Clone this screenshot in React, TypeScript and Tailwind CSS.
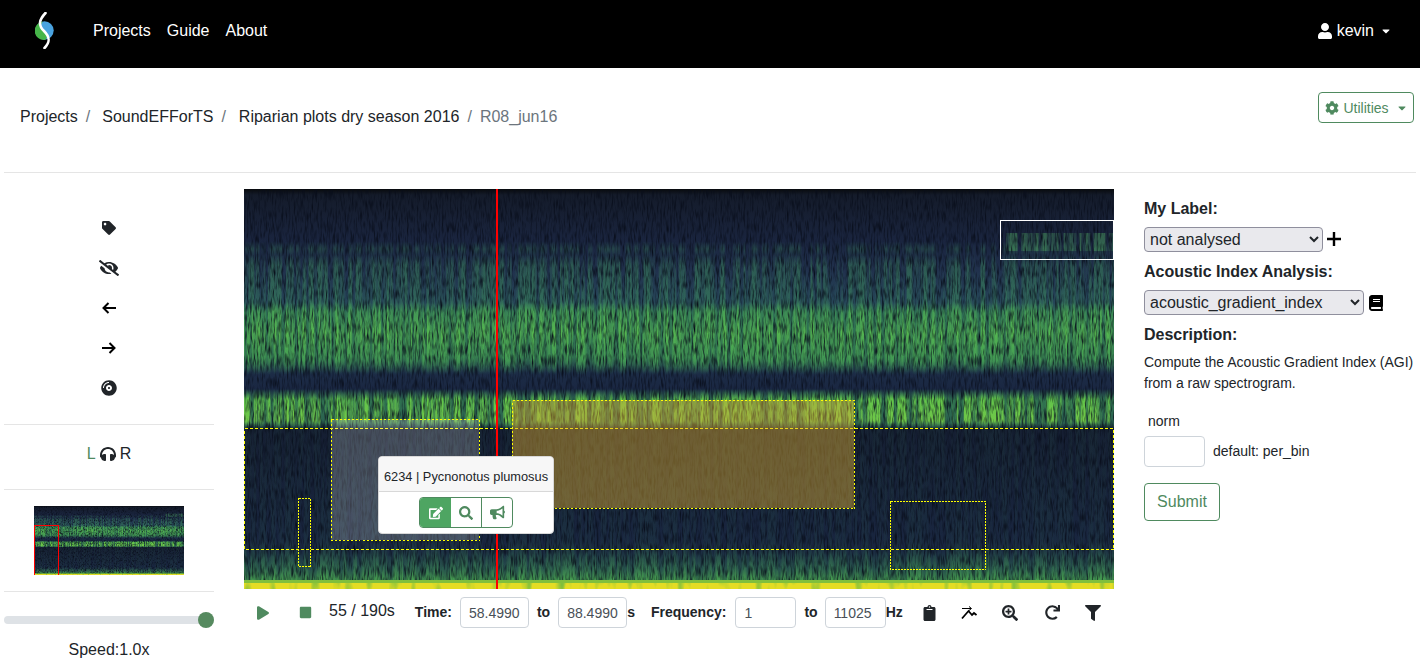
import {
  FaBook,
  FaBullhorn,
  FaCaretDown,
  FaClipboard,
  FaCog,
  FaCompactDisc,
  FaEdit,
  FaEyeSlash,
  FaFilter,
  FaHeadphones,
  FaPlay,
  FaRedo,
  FaSearch,
  FaSearchPlus,
  FaStop,
  FaTag,
  FaUser,
} from "react-icons/fa";

// annotation boxes on the spectrogram, in its own pixels
const boxes = [
  { x: 0, y: 239, w: 869, h: 121, dash: "3 2", fill: "none", opacity: 0 },
  { x: 87, y: 230, w: 148, h: 121, dash: "2 2", fill: "#ffffff", opacity: 0.2 },
  { x: 268, y: 211, w: 342, h: 108, dash: "2 2", fill: "#daa933", opacity: 0.45 },
  { x: 54, y: 309, w: 12, h: 68, dash: "2 1", fill: "none", opacity: 0 },
  { x: 646, y: 312, w: 95, h: 68, dash: "2 1", fill: "none", opacity: 0 },
];

function ArrowLeft() {
  return (
    <svg width="14" height="12" viewBox="0 0 14 12" fill="none" stroke="#000" strokeWidth="2">
      <path d="M6.5 1L1.5 6L6.5 11M1.5 6H14" />
    </svg>
  );
}

function ArrowRight() {
  return (
    <svg width="14" height="12" viewBox="0 0 14 12" fill="none" stroke="#000" strokeWidth="2">
      <path d="M7.5 1L12.5 6L7.5 11M12.5 6H0" />
    </svg>
  );
}

function PlusIcon() {
  return (
    <svg width="14" height="14" viewBox="0 0 14 14" stroke="#000" strokeWidth="2.4" className="-mt-[2px] ml-1">
      <path d="M7 0V14M0 7H14" />
    </svg>
  );
}

function Logo() {
  return (
    <svg width="19" height="37" viewBox="0 0 19 37">
      <circle cx="9.5" cy="18.5" r="9.2" fill="#4aa3e0" />
      <path d="M8 9.5 C5 13 5 16 9 19 C13 22 13 25 10 28 A9.2 9.2 0 0 1 8 9.5 Z" fill="#46b549" />
      <path d="M10.5 1 C4 8 3 13 9 19 C15 25 15.5 30 9.5 36" fill="none" stroke="#fff" strokeWidth="2.6" strokeLinecap="round" />
    </svg>
  );
}

function Spectrogram({ id, w, h }: { id: string; w: number; h: number }) {
  return (
    <svg width={w} height={h} viewBox="0 0 870 400" preserveAspectRatio="none" className="block">
      <defs>
        <linearGradient id={id + "base"} x1="0" y1="0" x2="0" y2="1">
          <stop offset="0" stopColor="#080a0c" />
          <stop offset="0.015" stopColor="#141b2a" />
          <stop offset="0.14" stopColor="#1a2540" />
          <stop offset="0.2" stopColor="#20304c" />
          <stop offset="0.285" stopColor="#264658" />
          <stop offset="0.31" stopColor="#2f7055" />
          <stop offset="0.42" stopColor="#30704f" />
          <stop offset="0.46" stopColor="#1c2c46" />
          <stop offset="0.5" stopColor="#1a2742" />
          <stop offset="0.53" stopColor="#2f7050" />
          <stop offset="0.585" stopColor="#2a6050" />
          <stop offset="0.6" stopColor="#151e32" />
          <stop offset="0.9" stopColor="#192640" />
          <stop offset="0.95" stopColor="#26504c" />
          <stop offset="1" stopColor="#3c8a45" />
        </linearGradient>
        <linearGradient id={id + "bands"} x1="0" y1="0" x2="0" y2="1">
          <stop offset="0.13" stopColor="#3d8f5c" stopOpacity="0" />
          <stop offset="0.15" stopColor="#3d8f5c" stopOpacity="0.3" />
          <stop offset="0.165" stopColor="#3d8f5c" stopOpacity="0.1" />
          <stop offset="0.19" stopColor="#3d8f5c" stopOpacity="0.45" />
          <stop offset="0.28" stopColor="#3d8f5c" stopOpacity="0.5" />
          <stop offset="0.305" stopColor="#4aa655" stopOpacity="0.9" />
          <stop offset="0.36" stopColor="#55b650" stopOpacity="1" />
          <stop offset="0.43" stopColor="#45a055" stopOpacity="0.85" />
          <stop offset="0.465" stopColor="#3d8f5c" stopOpacity="0" />
          <stop offset="0.5" stopColor="#3d8f5c" stopOpacity="0" />
          <stop offset="0.525" stopColor="#62c44a" stopOpacity="1" />
          <stop offset="0.58" stopColor="#70c848" stopOpacity="1" />
          <stop offset="0.6" stopColor="#3d8f5c" stopOpacity="0.08" />
          <stop offset="0.88" stopColor="#3d8f5c" stopOpacity="0.1" />
          <stop offset="0.95" stopColor="#4aa655" stopOpacity="0.4" />
          <stop offset="1" stopColor="#55bd50" stopOpacity="0.9" />
        </linearGradient>
        <filter id={id + "streak"} x="0" y="0" width="100%" height="100%" colorInterpolationFilters="sRGB">
          <feTurbulence type="fractalNoise" baseFrequency="0.24 0.007" numOctaves="2" seed="7" result="n" />
          <feColorMatrix in="n" type="matrix" values="0 0 0 0 0  0 0 0 0 0  0 0 0 0 0  3.2 0 0 0 -1.05" result="a" />
          <feComposite in="SourceGraphic" in2="a" operator="in" />
        </filter>
        <filter id={id + "speck"} x="0" y="0" width="100%" height="100%" colorInterpolationFilters="sRGB">
          <feTurbulence type="fractalNoise" baseFrequency="0.6 0.09" numOctaves="2" seed="3" result="n" />
          <feColorMatrix in="n" type="matrix" values="0 0 0 0 0.03  0 0 0 0 0.05  0 0 0 0 0.1  0 2 0 0 -0.85" />
        </filter>
        <filter id={id + "yellow"} x="0" y="0" width="100%" height="100%" colorInterpolationFilters="sRGB">
          <feTurbulence type="fractalNoise" baseFrequency="0.09 0.02" numOctaves="2" seed="11" result="n" />
          <feColorMatrix in="n" type="matrix" values="0 0 0 0 0  0 0 0 0 0  0 0 0 0 0  4 0 0 0 -0.9" result="a" />
          <feComposite in="SourceGraphic" in2="a" operator="in" />
        </filter>
      </defs>
      <rect width="870" height="400" fill={`url(#${id}base)`} />
      <rect width="870" height="400" fill={`url(#${id}bands)`} filter={`url(#${id}streak)`} />
      <rect x="762" y="44" width="108" height="18" fill="#4fa860" opacity="0.45" filter={`url(#${id}streak)`} />
      <rect width="870" height="400" fill="#000" filter={`url(#${id}speck)`} />
      <rect y="391" width="870" height="9" fill="#80bf3c" />
      <rect y="394" width="870" height="6" fill="#e4dc24" filter={`url(#${id}yellow)`} />
    </svg>
  );
}

function TrendIcon() {
  return (
    <svg width="16" height="14" viewBox="0 0 16 14" fill="none" stroke="#000">
      <path d="M1 2.5H10M8 .5L10.5 2.5L8 4.5" strokeWidth="1" />
      <path d="M1 12.5L7.5 5L11 9L13 7L15.5 9" strokeWidth="1.8" />
    </svg>
  );
}

function Field({ value, className }: { value: string; className: string }) {
  return (
    <input
      readOnly
      value={value}
      className={`h-[31px] rounded border border-[#ced4da] bg-white px-2 text-[14px] text-[#495057] outline-none ${className}`}
    />
  );
}

export default function App() {
  return (
    <div className="h-[668px] overflow-hidden bg-white font-['Liberation_Sans',sans-serif] text-[16px] text-[#212529]">
      {/* Navbar */}
      <nav className="flex h-[68px] items-center bg-black text-white">
        <div className="ml-[35px] -mt-[7px]">
          <Logo />
        </div>
        <div className="ml-[39px] flex gap-4 -mt-[6px]">
          <span>Projects</span>
          <span>Guide</span>
          <span>About</span>
        </div>
        <div className="ml-auto mr-[29px] flex items-center -mt-[6px]">
          <FaUser className="mr-1 h-4 w-4" />
          <span>kevin</span>
          <FaCaretDown className="ml-[7px] h-[12px] w-[10px]" />
        </div>
      </nav>

      {/* Breadcrumb */}
      <div className="mx-[4px] flex h-[105px] items-start justify-between border-b border-[#e5e5e5] px-[16px]">
        <div className="mt-[37px] flex">
          <span>Projects</span>
          <span className="ml-2 mr-3 text-[#6c757d]">/</span>
          <span>SoundEFForTS</span>
          <span className="ml-2 mr-[13px] text-[#6c757d]">/</span>
          <span>Riparian plots dry season 2016</span>
          <span className="mx-2 text-[#6c757d]">/</span>
          <span className="text-[#6c757d]">R08_jun16</span>
        </div>
        <button className="mr-[-14px] mt-[24px] flex h-[31px] w-[96px] items-center justify-center rounded border border-[#4f8a5f] pt-[1px] text-[14px] text-[#4f8a5f]">
          <FaCog className="mr-1 h-[14px] w-[14px]" />
          Utilities
          <FaCaretDown className="ml-2 h-[12px] w-[10px]" />
        </button>
      </div>

      <div className="flex">
        {/* Left tools */}
        <aside className="ml-[4px] w-[210px] shrink-0">
          <div className="flex flex-col items-center border-b border-[#e5e5e5] pt-[35px] pb-4">
            <div className="flex h-10 items-center justify-center">
              <FaTag className="h-[14px] w-[14px]" />
            </div>
            <div className="flex h-10 items-center justify-center">
              <FaEyeSlash className="h-4 w-5" />
            </div>
            <div className="flex h-10 items-center justify-center">
              <ArrowLeft />
            </div>
            <div className="flex h-10 items-center justify-center">
              <ArrowRight />
            </div>
            <div className="flex h-10 items-center justify-center">
              <FaCompactDisc className="h-4 w-4" />
            </div>
          </div>
          <div className="flex h-[65px] items-center justify-center gap-1 border-b border-[#e5e5e5] pb-[6px]">
            <span className="text-[#4f8a5f]">L</span>
            <FaHeadphones className="h-4 w-4" />
            <span>R</span>
          </div>
          <div className="flex justify-center border-b border-[#e5e5e5] py-4">
            <div className="relative">
              <Spectrogram id="mini" w={150} h={69} />
              <div className="absolute bottom-0 left-0 h-[50px] w-[25px] border-x border-t border-[#ff0000]" />
            </div>
          </div>
          <div className="mt-[24px] flex h-2 items-center justify-end rounded-full bg-[#dee2e6]">
            <div className="h-4 w-4 rounded-full bg-[#568a5f]" />
          </div>
          <div className="mt-[14px] text-center">Speed:1.0x</div>
        </aside>

        {/* Spectrogram and toolbar */}
        <main className="ml-[30px] mt-[16px] w-[870px] shrink-0">
          <div className="relative h-[400px] w-[870px]">
            <Spectrogram id="main" w={870} h={400} />
            <svg width="870" height="400" shapeRendering="crispEdges" className="absolute left-0 top-0">
              {boxes.map((b, i) => (
                <g key={i}>
                  <rect x={b.x} y={b.y} width={b.w} height={b.h} fill={b.fill} fillOpacity={b.opacity} />
                  <rect x={b.x + 0.5} y={b.y + 0.5} width={b.w} height={b.h} fill="none" stroke="#ffff00" strokeDasharray={b.dash} />
                </g>
              ))}
            </svg>
            <div className="absolute left-[756px] top-[31px] h-[40px] w-[114px] border border-white" />
            <div className="absolute left-[252px] top-0 h-[400px] w-[2px] bg-[#ff0000]" />
            <div className="absolute left-[134px] top-[267px] h-[78px] w-[176px] rounded border border-[#d8d8d8] bg-white">
              <div className="flex h-[35px] items-center justify-center rounded-t border-b border-[#d8d8d8] bg-[#f7f7f7] pt-[5px] text-[12.8px]">
                6234 | Pycnonotus plumosus
              </div>
              <div className="mt-[5px] flex justify-center">
                <div className="flex h-[31px] overflow-hidden rounded border border-[#4f8a5f] text-[#4f8a5f]">
                  <div className="flex w-[31px] items-center justify-center bg-[#4ea562] text-white">
                    <FaEdit className="h-[14px] w-[14px]" />
                  </div>
                  <div className="flex w-[31px] items-center justify-center border-r border-[#4f8a5f]">
                    <FaSearch className="h-[14px] w-[14px]" />
                  </div>
                  <div className="flex w-[30px] items-center justify-center">
                    <FaBullhorn className="h-[15px] w-[15px]" />
                  </div>
                </div>
              </div>
            </div>
          </div>

          <div className="mt-2 flex h-[31px] items-center text-[14px]">
            <FaPlay className="ml-[13px] h-[14px] w-[12px] text-[#4f8a5f]" />
            <FaStop className="ml-[30px] h-[13px] w-[13px] text-[#4f8a5f]" />
            <span className="ml-[17px] -mt-[4px] text-[16px]">55 / 190s</span>
            <b className="ml-[20px]">Time:</b>
            <Field value="58.4990" className="ml-[8px] w-[69px]" />
            <b className="ml-2">to</b>
            <Field value="88.4990" className="ml-[8px] w-[69px]" />
            <b>s</b>
            <b className="ml-[16px]">Frequency:</b>
            <Field value="1" className="ml-[9px] w-[61px]" />
            <b className="ml-2">to</b>
            <Field value="11025" className="ml-[7px] w-[61px]" />
            <b>Hz</b>
            <FaClipboard className="ml-[20px] h-4 w-[13px]" />
            <span className="ml-[25px]">
              <TrendIcon />
            </span>
            <FaSearchPlus className="ml-[25px] h-4 w-4" />
            <FaRedo className="ml-[27px] h-[15px] w-[15px]" />
            <FaFilter className="ml-[25px] h-4 w-4" />
          </div>
        </main>

        {/* Right panel */}
        <aside className="ml-[30px] mt-[16px] w-[272px] shrink-0">
          <b className="mt-[8px] block leading-6">My Label:</b>
          <div className="mt-[6px] flex items-center">
            <select defaultValue="not analysed" className="h-[25px] w-[179px] rounded border border-[#8f8f9d] bg-[#e9e9ed] pl-[1px] text-[16px]">
              <option>not analysed</option>
            </select>
            <PlusIcon />
          </div>
          <b className="mt-[8px] block leading-6">Acoustic Index Analysis:</b>
          <div className="mt-[6px] flex items-center">
            <select defaultValue="acoustic_gradient_index" className="h-[25px] w-[220px] rounded border border-[#8f8f9d] bg-[#e9e9ed] pl-[1px] text-[16px]">
              <option>acoustic_gradient_index</option>
            </select>
            <FaBook className="ml-[5px] h-4 w-[14px] text-black" />
          </div>
          <b className="mt-[8px] block leading-6">Description:</b>
          <p className="mt-[5px] text-[14px] leading-[21px]">
            Compute the Acoustic Gradient Index (AGI)
            <br />
            from a raw spectrogram.
          </p>
          <div className="ml-1 mt-[17px] text-[14px] leading-[21px]">norm</div>
          <div className="mt-[4px] flex items-center text-[14px]">
            <input readOnly className="h-[31px] w-[61px] rounded border border-[#ced4da] bg-white outline-none" />
            <span className="ml-2">default: per_bin</span>
          </div>
          <button className="mt-[16px] h-[38px] w-[76px] rounded border border-[#4f8a5f] text-[#4f8a5f]">Submit</button>
        </aside>
      </div>
    </div>
  );
}
